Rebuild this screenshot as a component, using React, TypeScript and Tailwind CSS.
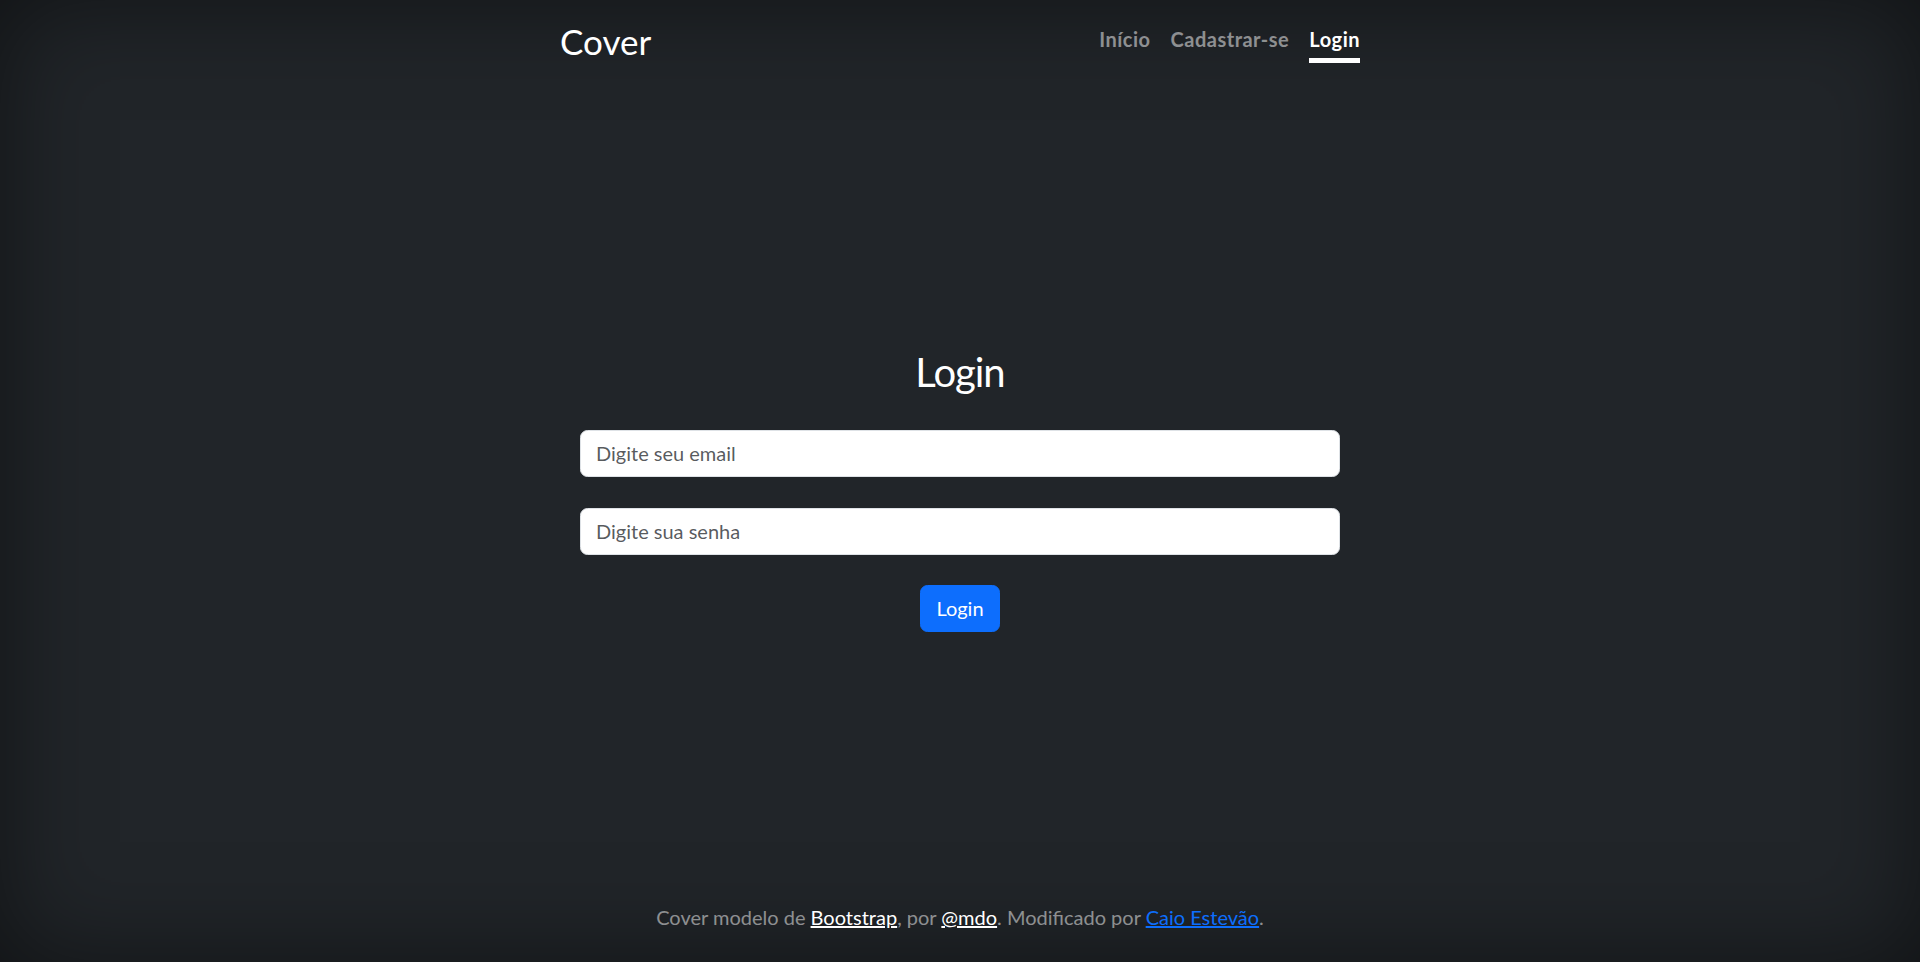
export default function App() {
  return (
    <div
      className="h-screen w-full bg-[#212529] text-white shadow-[inset_0_0_100px_rgba(0,0,0,0.5)] flex"
      style={{ fontFamily: 'Lato, "Noto Sans", sans-serif' }}
    >
      <div className="w-full max-w-[840px] mx-auto p-5 flex flex-col h-full">
        {/* Header */}
        <header className="mb-auto flex items-start justify-between">
          <h3 className="text-[35px] leading-[1.2] font-normal">Cover</h3>
          <nav className="flex text-[20px] font-bold leading-[28px] tracking-[0.5px]">
            <a href="#" className="py-[5px] border-b-[5px] border-transparent text-white/50 hover:text-white/75">
              Início
            </a>
            <a href="#" className="ml-5 py-[5px] border-b-[5px] border-transparent text-white/50 hover:text-white/75">
              Cadastrar-se
            </a>
            <a href="#" className="ml-5 py-[5px] border-b-[5px] border-white text-white">
              Login
            </a>
          </nav>
        </header>

        {/* Main */}
        <main className="px-5 pt-[14px] flex flex-col items-center">
          <h2 className="text-[40px] leading-[1.2] font-normal tracking-[-1px] mb-[34px]">Login</h2>
          <form className="w-full flex flex-col items-center" onSubmit={(e) => e.preventDefault()}>
            <input
              type="email"
              placeholder="Digite seu email"
              className="w-full h-[47px] px-[15px] rounded-[7.5px] border border-[#dee2e6] bg-white text-[20px] text-[#212529] placeholder:text-[#212529]/75 outline-none"
            />
            <input
              type="password"
              placeholder="Digite sua senha"
              className="w-full h-[47px] mt-[31px] px-[15px] rounded-[7.5px] border border-[#dee2e6] bg-white text-[20px] text-[#212529] placeholder:text-[#212529]/75 outline-none"
            />
            <button
              type="submit"
              className="mt-[30px] h-[47px] px-[15px] rounded-[7.5px] bg-[#0d6efd] text-white text-[20px] leading-[30px] border border-[#0d6efd]"
            >
              Login
            </button>
          </form>
        </main>

        {/* Footer */}
        <footer className="mt-auto pb-[10px] text-center text-[20px] leading-[30px] text-white/50">
          <p>
            Cover modelo de{" "}
            <a href="#" className="text-white underline">Bootstrap</a>, por{" "}
            <a href="#" className="text-white underline">@mdo</a>. Modificado por{" "}
            <a href="#" className="text-[#0d6efd] underline">Caio Estevão</a>.
          </p>
        </footer>
      </div>
    </div>
  );
}
